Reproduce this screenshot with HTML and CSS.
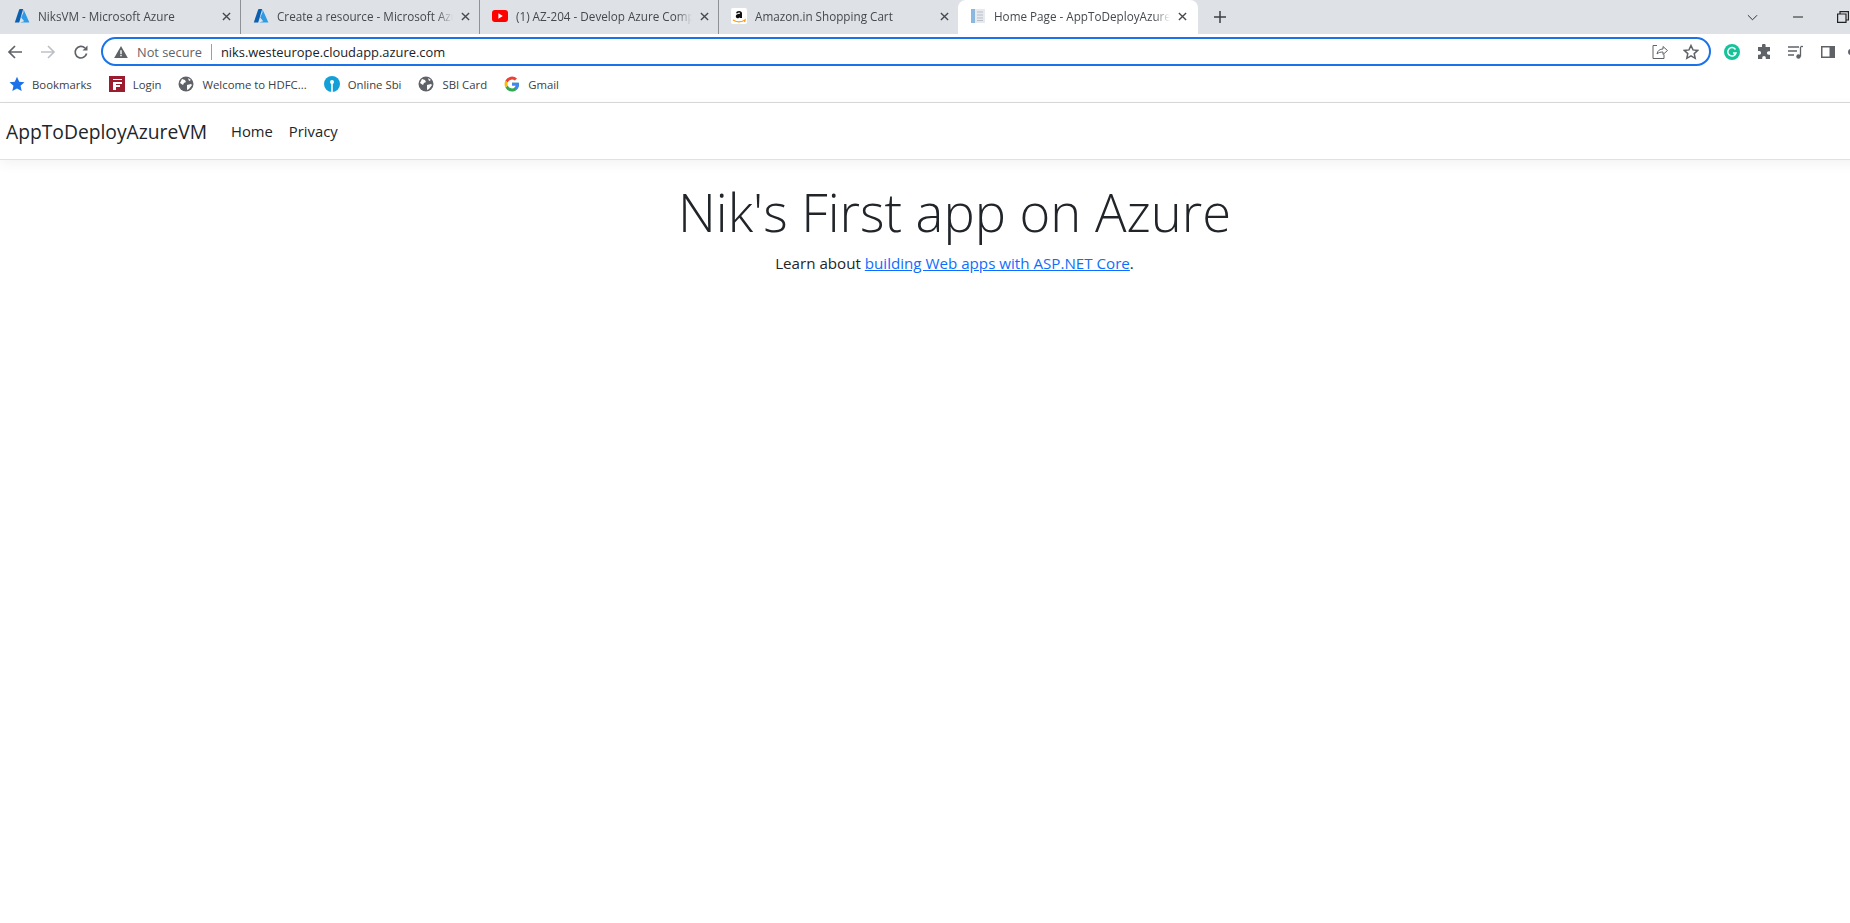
FILE: index.html
```html
<!DOCTYPE html>
<html lang="en">
<head>
    <meta charset="UTF-8">
    <title>Home Page - AppToDeployAzureVM</title>
    <link rel="stylesheet" href="styles.css">
</head>
<body>
<div class="window">

    <!-- tab strip -->
    <div class="tabstrip">
        <div class="tab">
            <svg class="favicon" viewBox="0 0 16 16"><path d="M5.6 1h3.6L5.2 14.4H0.8L5 2z" fill="#0a5fb0"/><path d="M9.6 1.6L15.4 14.4H6.2l4-1.2-3-3.6 2.2-5z" fill="#2f9be6"/></svg>
            <span class="tab-title">NiksVM - Microsoft Azure</span>
            <svg class="tab-close" viewBox="0 0 10 10"><path d="M1 1l8 8M9 1l-8 8"/></svg>
        </div>
        <div class="tab">
            <svg class="favicon" viewBox="0 0 16 16"><path d="M5.6 1h3.6L5.2 14.4H0.8L5 2z" fill="#0a5fb0"/><path d="M9.6 1.6L15.4 14.4H6.2l4-1.2-3-3.6 2.2-5z" fill="#2f9be6"/></svg>
            <span class="tab-title">Create a resource - Microsoft Azure</span>
            <svg class="tab-close" viewBox="0 0 10 10"><path d="M1 1l8 8M9 1l-8 8"/></svg>
        </div>
        <div class="tab">
            <svg class="favicon" viewBox="0 0 16 16"><rect y="2" width="16" height="12" rx="3" fill="#f00"/><path d="M6.4 5.2l4.4 2.8-4.4 2.8z" fill="#fff"/></svg>
            <span class="tab-title">(1) AZ-204 - Develop Azure Compute Solutions</span>
            <svg class="tab-close" viewBox="0 0 10 10"><path d="M1 1l8 8M9 1l-8 8"/></svg>
        </div>
        <div class="tab no-sep">
            <svg class="favicon" viewBox="0 0 16 16"><rect width="16" height="16" rx="2" fill="#fff"/><path d="M5 5.2c.3-1.6 1.4-2.3 3-2.3 2 0 3 .9 3 2.6v4.6h-2v-.8c-.5.7-1.200 1-2 1-1.300 0-2.200-.8-2.200-2.100 0-1.600 1.300-2.400 4.200-2.500 0-.9-.3-1.300-1-1.300-.6 0-1 .3-1.100 .9z" fill="#111"/><path d="M2 12c3.500 2.300 8.500 2.300 12 0l-.4 1.800" fill="none" stroke="#f90" stroke-width="1.300"/></svg>
            <span class="tab-title">Amazon.in Shopping Cart</span>
            <svg class="tab-close" viewBox="0 0 10 10"><path d="M1 1l8 8M9 1l-8 8"/></svg>
        </div>
        <div class="tab active">
            <svg class="favicon" viewBox="0 0 16 16"><rect x="1" y="1" width="14" height="14" fill="#e6e9ee"/><rect x="1" y="1" width="4" height="14" fill="#8cb8e0"/><path d="M7 4h6M7 7h6M7 10h6M7 12.500h6" stroke="#b9bec6"/></svg>
            <span class="tab-title">Home Page - AppToDeployAzureVM</span>
            <svg class="tab-close" viewBox="0 0 10 10"><path d="M1 1l8 8M9 1l-8 8"/></svg>
        </div>
        <svg class="new-tab" viewBox="0 0 12 12"><path d="M6 0v12M0 6h12"/></svg>
        <div class="window-controls">
            <svg class="win-chevron" viewBox="0 0 12 7"><path d="M1 1l5 5 5-5"/></svg>
            <svg class="win-min" viewBox="0 0 10 2"><path d="M0 1h10"/></svg>
            <svg class="win-restore" viewBox="0 0 10 10"><path d="M0.500 2.500h7v7h-7zM2.500 2.500v-2h7v7h-2"/></svg>
        </div>
    </div>

    <!-- toolbar -->
    <div class="toolbar">
        <svg class="nav-icon" viewBox="0 0 16 16"><path d="M15 8H2M8 2L2 8l6 6" stroke="#5f6368"/></svg>
        <svg class="nav-icon" viewBox="0 0 16 16"><path d="M1 8h13M8 2l6 6-6 6" stroke="#bdc1c6"/></svg>
        <svg class="nav-icon" viewBox="0 0 16 16"><path d="M13.600 9.500A5.800 5.800 0 1 1 12 4" stroke="#5f6368"/><path d="M14.500 1.500v5h-5z" fill="#5f6368"/></svg>
        <div class="omnibox">
            <svg class="warn-icon" viewBox="0 0 16 14"><path d="M8 0L16 14H0z" fill="#5f6368"/><path d="M7.200 5h1.600v4.500H7.200zM7.200 10.500h1.600v1.600H7.200z" fill="#fff"/></svg>
            <span class="not-secure">Not secure</span>
            <span class="omni-sep"></span>
            <span class="url">niks.westeurope.cloudapp.azure.com</span>
            <svg class="share-icon" viewBox="0 0 16 16"><path d="M5 1.500H1v13h11v-4" stroke="#5f6368" fill="none"/><path d="M5 10c.5-3.500 3-5 6-5V2.500L15.500 6.500 11 10.500V8c-2.500 0-4.500.5-6 2z" stroke="#5f6368" fill="none"/></svg>
            <svg class="star-icon" viewBox="0 0 16 16"><path d="M8 1.500l2 4.400 4.800.5-3.600 3.200 1 4.700L8 11.900l-4.200 2.400 1-4.700L1.200 6.400 6 5.900z" stroke="#5f6368" stroke-width="1.500" fill="none"/></svg>
        </div>
        <div class="ext-icons">
            <svg viewBox="0 0 16 16"><circle cx="8" cy="8" r="8" fill="#15c39a"/><path d="M11.500 5.500A4.200 4.200 0 1 0 12 9H9" stroke="#fff" stroke-width="1.500" fill="none"/></svg>
            <svg viewBox="0 0 16 16"><path d="M6 1.500a1.800 1.800 0 0 1 3.600 0V3H14v4.200h-1.300a1.800 1.800 0 0 0 0 3.600H14V15H9.800v-1.300a1.800 1.800 0 0 0-3.600 0V15H2v-4.300h1.300a1.800 1.800 0 0 0 0-3.600H2V3h4z" fill="#5f6368"/></svg>
            <svg viewBox="0 0 16 16"><path d="M0 3h11M0 7h9M0 11h6" stroke="#5f6368" stroke-width="1.300"/><path d="M12.500 3v9.500" stroke="#5f6368" stroke-width="1.300"/><path d="M12.500 2.500H15" stroke="#5f6368" stroke-width="1.300"/><circle cx="10.500" cy="12.500" r="2.200" fill="#5f6368"/></svg>
            <svg viewBox="0 0 16 16"><rect x="1" y="2" width="14" height="12" fill="#5f6368"/><rect x="2.500" y="3.500" width="7" height="9" fill="#fff"/></svg>
            <svg class="ext-cut" viewBox="0 0 16 16"><circle cx="8" cy="8" r="3" fill="#5f6368"/></svg>
        </div>
    </div>

    <!-- bookmarks -->
    <div class="bookmarks">
        <div class="bookmark bm-first">
            <svg class="bm-icon" viewBox="0 0 16 16"><path d="M8 .8l2.200 4.900 5.300.6-4 3.500 1.200 5.300L8 12.400l-4.700 2.700 1.200-5.300-4-3.500 5.300-.6z" fill="#1a73e8"/></svg>
            <span>Bookmarks</span>
        </div>
        <div class="bookmark">
            <svg class="bm-icon" viewBox="0 0 16 16"><rect width="16" height="16" fill="#9b1c2e"/><path d="M4 3h9v1H4zM4 6h9v2H7v1h4v2H7v3H4z" fill="#fff"/></svg>
            <span>Login</span>
        </div>
        <div class="bookmark">
            <svg class="bm-icon" viewBox="0 0 16 16"><circle cx="8" cy="8" r="7.500" fill="#5f6368"/><path d="M4 3l3 1 1 2-2 1-1 2-3-2zM9 9l4-1 1 1-3 4-2 1z M10 2l3 2-2 1z" fill="#fff"/></svg>
            <span>Welcome to HDFC...</span>
        </div>
        <div class="bookmark">
            <svg class="bm-icon" viewBox="0 0 16 16"><circle cx="8" cy="8" r="8" fill="#12a0d7"/><circle cx="8" cy="6" r="2" fill="#fff"/><rect x="7.200" y="6" width="1.600" height="10" fill="#fff"/></svg>
            <span>Online Sbi</span>
        </div>
        <div class="bookmark">
            <svg class="bm-icon" viewBox="0 0 16 16"><circle cx="8" cy="8" r="7.500" fill="#5f6368"/><path d="M4 3l3 1 1 2-2 1-1 2-3-2zM9 9l4-1 1 1-3 4-2 1z M10 2l3 2-2 1z" fill="#fff"/></svg>
            <span>SBI Card</span>
        </div>
        <div class="bookmark">
            <svg class="bm-icon" viewBox="0 0 16 16"><path d="M14.800 6.700H8v2.800h3.900c-.4 1.900-2 3-3.900 3A4.500 4.500 0 0 1 3.800 9.500L1.400 11.400A7.500 7.500 0 0 0 8 15.500c3.900 0 7-2.800 7-7.300 0-.5-.1-1-.2-1.500z" fill="#34a853"/><path d="M14.800 6.700H8v2.800h3.900c-.2 1-.8 1.800-1.600 2.300l2.300 1.800c1.400-1.300 2.400-3.300 2.400-5.400 0-.5-.1-1-.2-1.500z" fill="#4285f4"/><path d="M3.800 9.500a4.500 4.500 0 0 1 0-3L1.400 4.600a7.500 7.500 0 0 0 0 6.800z" fill="#fbbc05"/><path d="M8 3.500c1.100 0 2.100.4 2.900 1.100l2.100-2.100A7.500 7.500 0 0 0 1.400 4.600l2.400 1.900A4.500 4.500 0 0 1 8 3.500z" fill="#ea4335"/></svg>
            <span>Gmail</span>
        </div>
    </div>

    <!-- the page itself -->
    <nav class="navbar">
        <a class="brand">AppToDeployAzureVM</a>
        <a class="nav-link">Home</a>
        <a class="nav-link">Privacy</a>
    </nav>
    <main class="hero">
        <h1>Nik's First app on Azure</h1>
        <p>Learn about <a href="#">building Web apps with ASP.NET Core</a>.</p>
    </main>
</div>
</body>
</html>
```

FILE: styles.css
```css
* {
    margin: 0;
    padding: 0;
    box-sizing: border-box;
}

html, body {
    height: 100%;
    overflow: hidden;
    background-color: #fff;
}

body {
    font-family: 'Open Sans', 'Noto Sans', sans-serif;
    color: #212529;
}

/* screenshot is cut off on the right, the real window is wider */
.window {
    width: 1909px;
}

.tabstrip {
    display: flex;
    align-items: center;
    height: 34px;
    padding-left: 2px;
    background-color: #dee1e6;
}

.tab {
    display: flex;
    align-items: center;
    width: 239px;
    height: 34px;
    padding: 0 9px 2px 12px;
    border-right: 1px solid #8e9196;
    background-clip: padding-box;
}

.tab.no-sep {
    border-right: none;
}

.tab.active {
    width: 240px;
    padding-right: 11px;
    border-right: none;
    background-color: #fff;
    border-radius: 8px 8px 0 0;
}

.favicon {
    width: 16px;
    height: 16px;
    flex-shrink: 0;
}

.tab-title {
    flex: 1;
    min-width: 0;
    margin: 0 8px;
    font-size: 11.7px;
    color: #45494e;
    white-space: nowrap;
    overflow: hidden;
    -webkit-mask-image: linear-gradient(to right, #000 calc(100% - 16px), transparent);
    mask-image: linear-gradient(to right, #000 calc(100% - 16px), transparent);
}

.tab-close {
    width: 9px;
    height: 9px;
    flex-shrink: 0;
    fill: none;
    stroke: #45494e;
    stroke-width: 1.5;
}

.new-tab {
    width: 12px;
    height: 12px;
    margin-left: 16px;
    fill: none;
    stroke: #3c4043;
    stroke-width: 1.5;
}

.window-controls {
    display: flex;
    align-items: center;
    margin-left: 521px;
}

.window-controls svg {
    fill: none;
    stroke: #222;
}

.win-chevron {
    width: 11px;
    height: 7px;
}

.win-min {
    width: 10px;
    height: 2px;
    margin-left: 35px;
}

.win-restore {
    width: 12px;
    height: 12px;
    margin-left: 34px;
}

.toolbar {
    display: flex;
    align-items: center;
    height: 35px;
    padding-left: 7px;
}

.nav-icon {
    width: 16px;
    height: 16px;
    margin-right: 17px;
    fill: none;
    stroke-width: 1.7;
}

.omnibox {
    display: flex;
    align-items: center;
    width: 1610px;
    height: 29px;
    margin-left: -5px;
    padding: 0 10px 0 11px;
    border: 2px solid #1a73e8;
    border-radius: 15px;
}

.warn-icon {
    width: 14px;
    height: 12px;
}

.not-secure {
    margin-left: 9px;
    font-size: 12.8px;
    color: #5f6368;
}

.omni-sep {
    width: 1px;
    height: 16px;
    margin: 0 9px;
    background-color: #9aa0a6;
}

.url {
    flex: 1;
    font-size: 12.9px;
    color: #202124;
}

.share-icon {
    width: 16px;
    height: 16px;
    margin-right: 15px;
}

.star-icon {
    width: 16px;
    height: 16px;
}

.ext-icons {
    display: flex;
    align-items: center;
    gap: 16px;
    margin-left: 13px;
}

.ext-icons svg {
    width: 16px;
    height: 16px;
}

.ext-icons .ext-cut {
    margin-left: -9px;
}

.bookmarks {
    display: flex;
    align-items: center;
    height: 34px;
    padding-left: 9px;
    padding-bottom: 3px;
    border-bottom: 1px solid #d9d9d9;
}

.bookmark {
    display: flex;
    align-items: center;
    gap: 8px;
    margin-right: 17px;
    font-size: 11.35px;
    color: #3c4043;
    white-space: nowrap;
}

.bm-first {
    gap: 7px;
}

.bm-icon {
    width: 16px;
    height: 16px;
    flex-shrink: 0;
}

.navbar {
    display: flex;
    align-items: center;
    height: 57px;
    padding-left: 6px;
    border-bottom: 1px solid #dee2e6;
    box-shadow: 0 4px 12px rgba(0, 0, 0, 0.05);
}

.brand {
    margin-right: 24px;
    font-size: 19.25px;
}

.nav-link {
    margin-right: 16px;
    font-size: 14.8px;
}

.hero {
    padding-top: 20px;
    text-align: center;
}

h1 {
    font-size: 52.5px;
    font-weight: 300;
    line-height: 1.2;
    margin-bottom: 9px;
}

p {
    font-size: 15.15px;
    line-height: 1.5;
}

p a {
    color: #0d6efd;
}
```
